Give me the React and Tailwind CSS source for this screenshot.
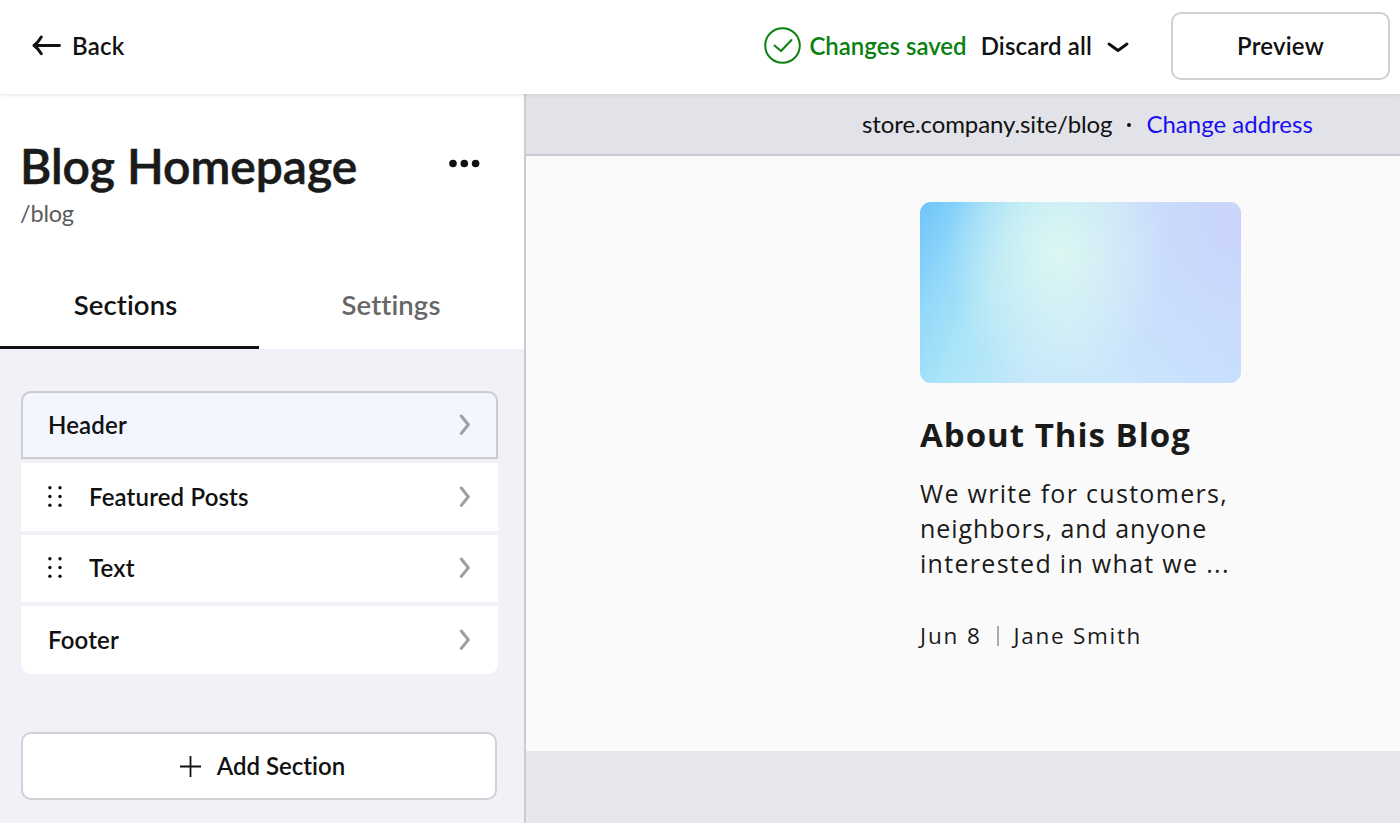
import { useState } from "react";
import clsx from "clsx";

const sections = [
  { name: "Header", draggable: false },
  { name: "Featured Posts", draggable: true },
  { name: "Text", draggable: true },
  { name: "Footer", draggable: false },
];

function BackArrow() {
  return (
    <svg width="30" height="22" viewBox="0 0 30 22" fill="none" stroke="#111" strokeWidth="2.900" strokeLinecap="round" strokeLinejoin="round">
      <path d="M27.500 10.500H2M9.300 2C7.500 5.200 5 8.200 2 10.500c3 2.200 5.500 5 7.300 8.200" />
    </svg>
  );
}

function SavedIcon() {
  return (
    <svg width="37" height="38" viewBox="0 0 37 38" fill="none" stroke="#0a800f" strokeWidth="2" strokeLinecap="round" strokeLinejoin="round">
      <circle cx="18.500" cy="18.500" r="17.300" />
      <path d="M10.500 18.500l6.500 5.500 10.500-11" />
    </svg>
  );
}

function ChevronDown() {
  return (
    <svg width="22" height="12" viewBox="0 0 22 12" className="mt-1" fill="none" stroke="#111" strokeWidth="2.900" strokeLinecap="round" strokeLinejoin="round">
      <path d="M2 2l9 6.500L20 2" />
    </svg>
  );
}

function ChevronRight() {
  return (
    <svg width="12" height="22" viewBox="0 0 12 22" fill="none" stroke="#9f9f9f" strokeWidth="3" strokeLinecap="round" strokeLinejoin="round">
      <path d="M2.300 2l7 8.700-7 8.700" />
    </svg>
  );
}

function DragHandle() {
  return (
    <svg width="15" height="22" viewBox="0 0 15 22" fill="#111">
      {[1.8, 10.5, 19.2].map((y) => (
        <g key={y}>
          <circle cx="1.900" cy={y} r="1.700" />
          <circle cx="12" cy={y} r="1.700" />
        </g>
      ))}
    </svg>
  );
}

function TopBar() {
  return (
    <header className="relative z-10 flex h-[94px] shrink-0 items-center justify-between bg-white pr-[10px] pb-[2px] pl-8 text-2xl font-semibold shadow-[0_1px_3px_rgba(30,30,60,0.12)]">
      <button type="button" className="flex items-center gap-[10px] tracking-[0.2px]">
        <BackArrow />
        Back
      </button>
      <div className="flex items-center">
        <SavedIcon />
        <span className="ml-[8px] text-[#0a800f]">Changes saved</span>
        <button type="button" className="ml-[14px] flex items-center gap-[15px] tracking-[0.150px]">
          Discard all
          <ChevronDown />
        </button>
        <button type="button" className="ml-[42px] h-[68px] w-[219px] rounded-[10px] border-2 border-[#cfcfd6] tracking-[0.2px]">
          Preview
        </button>
      </div>
    </header>
  );
}

function Sidebar() {
  const [tab, setTab] = useState("Sections");
  const [selected, setSelected] = useState("Header");

  return (
    <aside className="flex w-[526px] shrink-0 flex-col border-r-2 border-[#cbcbd3] bg-[#f2f1f7]">
      <div className="h-[255px] bg-white">
        <div className="flex items-start justify-between pt-[43px] pr-11 pl-5">
          <div>
            <h1 className="text-[48px] leading-[58px] font-semibold text-[#1a1a1a] [-webkit-text-stroke:0.6px_#1a1a1a]">Blog Homepage</h1>
            <p className="text-[23.500px] leading-9 tracking-[-0.2px] text-[#5c5c5c]">/blog</p>
          </div>
          <button type="button" className="mt-[22px]" aria-label="More">
            <svg width="32" height="9" viewBox="0 0 32 9" fill="#111">
              <circle cx="5" cy="4.500" r="3.800" />
              <circle cx="16.300" cy="4.500" r="3.800" />
              <circle cx="27.600" cy="4.500" r="3.800" />
            </svg>
          </button>
        </div>
        <div className="mt-[29px] flex h-[89px] text-[27.500px] font-semibold tracking-[0.1px]">
          {["Sections", "Settings"].map((name) => (
            <button
              key={name}
              type="button"
              onClick={() => setTab(name)}
              className={clsx(
                "w-[259px] border-b-[3px] pt-1",
                name === "Sections" ? "pr-2" : "pl-[5px]",
                tab === name ? "border-[#111] text-[#111]" : "border-transparent text-[#666]"
              )}
            >
              {name}
            </button>
          ))}
        </div>
      </div>

      <div className="mt-[42px] ml-[21px] flex w-[477px] flex-col gap-1">
        {sections.map((section) => (
          <button
            key={section.name}
            type="button"
            onClick={() => setSelected(section.name)}
            className={clsx(
              "flex h-[67.750px] items-center border-2 pr-[25px] pl-[25px] text-2xl font-semibold tracking-[0.150px] first:rounded-t-[10px] last:rounded-b-[10px]",
              selected === section.name ? "border-[#cbcbd1] bg-[#f3f5ff]" : "border-white bg-white"
            )}
          >
            {section.draggable && (
              <span className="mr-[26px]">
                <DragHandle />
              </span>
            )}
            <span className="flex-1 text-left">{section.name}</span>
            <ChevronRight />
          </button>
        ))}
      </div>

      <button
        type="button"
        className="mt-[58px] ml-[21px] flex h-[68px] w-[476px] items-center justify-center gap-4 rounded-[10px] border-2 border-[#cfcfd6] bg-white pl-[7px] text-2xl font-semibold"
      >
        <svg width="21" height="21" viewBox="0 0 21 21" fill="none" stroke="#111" strokeWidth="1.800">
          <path d="M10.500 0v21M0 10.500h21" />
        </svg>
        Add Section
      </button>
    </aside>
  );
}

function Canvas() {
  return (
    <main className="flex flex-1 flex-col bg-[#e7e8ec]">
      <div className="flex h-[62px] shrink-0 items-center border-b-2 border-[#cacad1] bg-[#e2e3e8] pb-px pl-[336px] text-2xl whitespace-nowrap">
        <span className="tracking-[-0.1px]">store.company.site/blog</span>
        <span className="mx-[15px] mt-[3px] size-1 rounded-full bg-[#111]" />
        <a href="#" className="text-[#1a0ff0]">Change address</a>
      </div>

      <article className="h-[595px] bg-[#fafafa] pt-[46px] pl-[394px] font-['Open_Sans',sans-serif] text-[#1a1a1a]">
        <div className="h-[181px] w-[321px] rounded-[11px] bg-[radial-gradient(ellipse_34%_75%_at_43%_28%,#dcf7f2_0%,#dcf7f2a0_35%,#dcf7f200_100%),linear-gradient(118deg,#6ec4fa_0%,#8ad5f8c0_15%,#a2e4f690_28%,#b8f0f400_48%),radial-gradient(ellipse_65%_110%_at_100%_10%,#cad4fb_0%,#cad4fba0_35%,#cad4fb00_100%),linear-gradient(90deg,#b0e4fc,#c4e8fa_28%,#cbe8fb_50%,#c8e1ff)]" />
        <h2 className="mt-7 text-[33px] leading-[48px] font-bold tracking-[1px]">About This Blog</h2>
        <p className="mt-[17px] text-[25px] leading-[35px] tracking-[1.300px] whitespace-nowrap">
          We write for customers,
          <br />
          <span className="tracking-[0.950px]">neighbors, and anyone</span>
          <br />
          interested in what we ...
        </p>
        <div className="mt-[38px] flex items-center text-[22.500px] leading-[34px] tracking-[1.850px]">
          <span>Jun 8</span>
          <span className="mr-[15px] ml-[15px] h-5 w-0.5 bg-[#aaa]" />
          <span className="tracking-[1.700px]">Jane Smith</span>
        </div>
      </article>
    </main>
  );
}

export default function App() {
  return (
    <div className="flex h-screen flex-col overflow-hidden bg-white font-[Lato,sans-serif] text-[#111] [font-variant-ligatures:none]">
      <TopBar />
      <div className="flex min-h-0 flex-1">
        <Sidebar />
        <Canvas />
      </div>
    </div>
  );
}
